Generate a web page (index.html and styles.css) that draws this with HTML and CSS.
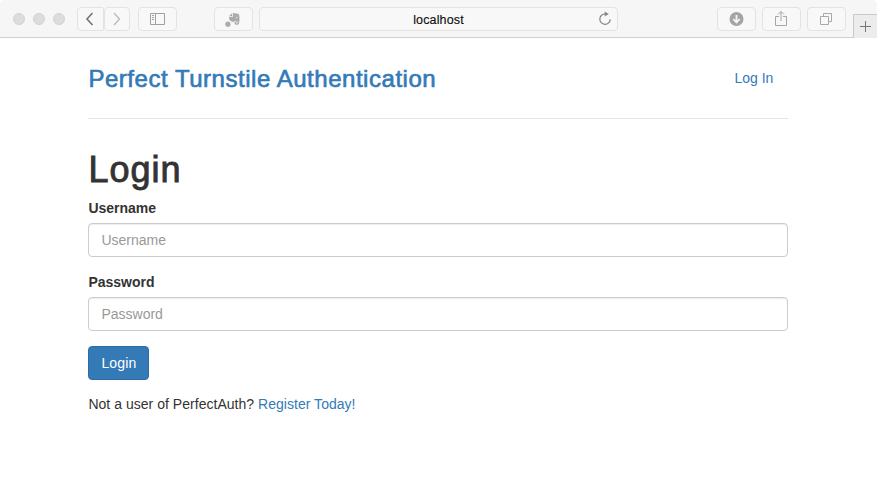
FILE: index.html
```html
<!DOCTYPE html>
<html lang="en">
<head>
<meta charset="utf-8">
<title>Perfect Turnstile Authentication</title>
<link rel="stylesheet" href="styles.css">
</head>
<body>
<div class="toolbar">
  <div class="lights"><i></i><i></i><i></i></div>
  <div class="nav">
    <span class="tool"><svg width="26" height="22" viewBox="0 0 26 22"><path d="M14.500 5 9 11l5.500 6" fill="none" stroke="#747474" stroke-width="1.600"/></svg></span>
    <span class="tool"><svg width="26" height="22" viewBox="0 0 26 22"><path d="M10 5 15.500 11 10 17" fill="none" stroke="#bcbcbc" stroke-width="1.400"/></svg></span>
  </div>
  <span class="tool wide sidebar"><svg width="37" height="22" viewBox="0 0 37 22"><g fill="none" stroke="#a0a0a0"><path d="M11.500 5.500h14v11h-14zM16.500 5.500v11"/><path d="M13 7.500h2M13 9.500h2M13 11.500h2"/></g></svg></span>
  <span class="tool wide clip"><svg width="37" height="22" viewBox="0 0 37 22" fill="#ababab"><path d="M14 8.300 17 5.200V8.300zM17.800 5.200c1.200-.5 2.200-.3 2.800.4 2 0 3.300.3 3.600 1.600.5 2.400.4 5.600-.2 8-.3 1.400-1.500 1.600-2.900 1.500-1.300-.1-1.700-1-1.500-2 .2-.9 1-1.300 2-1.100v1c-.7 0-.9.800-.1.900 1.100.1 1.300-.7 1.100-2-1 .1-1.900-.2-2.300-1-.6 1.100-1.500 1.500-2.500 1.200-2-.4-3.600-1.400-3.700-4.500h3.700z"/><path d="M14.100 9h5v4.300c-2.800.5-4.800-.4-5-4.300z"/><circle cx="21.800" cy="9.700" r=".6" fill="#f6f6f6"/><circle cx="12.900" cy="16.200" r="2.600"/></svg></span>
  <div class="address"><span>localhost</span><svg class="reload" width="14" height="16" viewBox="0 0 14 16"><path d="M7.400 3A5.200 5.200 0 1 0 12.200 8.200" fill="none" stroke="#858585" stroke-width="1.200"/><path d="M6.700.5v5L10.800 3z" fill="#858585"/></svg></div>
  <span class="tool wide download"><svg width="37" height="22" viewBox="0 0 37 22"><circle cx="18.500" cy="11" r="7" fill="#a5a5a5"/><path d="M18.500 7v6M15.300 11l3.200 3.500 3.200-3.500" fill="none" stroke="#f7f7f7" stroke-width="1.800"/></svg></span>
  <span class="tool wide"><svg width="37" height="22" viewBox="0 0 37 22" fill="none" stroke="#a5a5a5"><path d="M16 8.500h-3.500v9h11v-9H20M18 13V3.500M15 6.500l3-3 3 3"/></svg></span>
  <span class="tool wide"><svg width="37" height="22" viewBox="0 0 37 22" fill="none" stroke="#a8a8a8"><path d="M12.500 8.500h8v8h-8zM15.500 8.500v-3h8v8h-3"/></svg></span>
  <span class="newtab"><svg width="24" height="23" viewBox="0 0 24 23"><path d="M11.500 6v11M6 11.500h11" stroke="#777" fill="none"/></svg></span>
</div>
<main class="container">
  <header class="header">
    <h3><a>Perfect Turnstile Authentication</a></h3>
    <nav><a>Log In</a></nav>
  </header>
  <h1>Login</h1>
  <form>
    <label for="user">Username</label>
    <input id="user" type="text" placeholder="Username">
    <label for="pass">Password</label>
    <input id="pass" type="password" placeholder="Password">
    <button type="button">Login</button>
  </form>
  <p><span class="question">Not a user of PerfectAuth?</span> <a class="register">Register Today!</a></p>
</main>
</body>
</html>
```
FILE: styles.css
```css
* { box-sizing: border-box; }
body {
  margin: 0;
  background: #fff;
  color: #333;
  font: 14px/20px "Liberation Sans", Arial, sans-serif;
}
a { color: #337ab7; text-decoration: none; }
svg { display: block; flex: none; }

.toolbar {
  display: flex;
  height: 38px;
  padding: 7px 0 0 13px;
  background: #f6f6f6;
  border-bottom: 1px solid #cfcfcf;
  border-radius: 5px 5px 0 0;
}
.lights { display: flex; gap: 8px; width: 64px; padding-top: 6px; }
.lights i {
  width: 12px;
  height: 12px;
  border: 1px solid #d2d2d2;
  border-radius: 50%;
  background: #dcdcdc;
}
.nav { display: flex; margin-right: 8px; }
.tool {
  display: flex;
  align-items: center;
  justify-content: center;
  width: 27px;
  height: 24px;
  border: 1px solid #e3e3e3;
  border-radius: 4px;
  background: #f8f8f8;
}
.nav .tool:last-child { width: 26px; }
.nav .tool:first-child { border-radius: 4px 2px 2px 4px; }
.wide { width: 39px; margin-right: 6px; }
.sidebar { margin-right: 37px; }
.address {
  display: flex;
  align-items: center;
  justify-content: center;
  position: relative;
  width: 359px;
  height: 24px;
  margin-right: 99px;
  border: 1px solid #e3e3e3;
  border-radius: 4px;
  background: #f8f8f8;
  color: #111;
  font-size: 12.5px;
}
.address span { padding-top: 1px; letter-spacing: .15px; -webkit-text-stroke: .15px #111; }
.reload { position: absolute; right: 5px; top: 3px; }
.newtab {
  width: 24px;
  height: 24px;
  margin: 7px 0 0 1px;
  border: solid #c9c9c9;
  border-width: 1px 0 0 1px;
  background: #ececec;
}

.container { width: 700px; margin: 0 0 0 88.4px; }
.header {
  display: flex;
  align-items: center;
  justify-content: space-between;
  height: 81px;
  border-bottom: 1px solid #e5e5e5;
}
h1, h3 { margin: 0; font-weight: 400; }
h3 { padding-top: 2px; font-size: 24px; line-height: 40px; letter-spacing: .53px; }
h3 a { -webkit-text-stroke: .65px #337ab7; }
nav { padding-right: 15px; }
h1 {
  margin: 31px 0 9px;
  font-size: 36px;
  line-height: 39px;
  letter-spacing: 1px;
  -webkit-text-stroke: .9px #333;
}
form { display: flex; flex-direction: column; align-items: flex-start; }
label { margin-bottom: 5px; font-weight: 700; }
input {
  width: 100%;
  height: 34px;
  margin: 0 0 15px;
  padding: 6px 12px;
  border: 1px solid #ccc;
  border-radius: 4px;
  background: #fff;
  box-shadow: inset 0 1px 1px rgba(0, 0, 0, .075);
  font: inherit;
}
input::placeholder { color: #999; opacity: 1; }
button {
  height: 34px;
  padding: 6px 12px;
  border: 1px solid #2e6da4;
  border-radius: 4px;
  background: #337ab7;
  color: #fff;
  font: inherit;
  letter-spacing: .15px;
}
p { margin: 14px 0 0; letter-spacing: .03px; }
```
